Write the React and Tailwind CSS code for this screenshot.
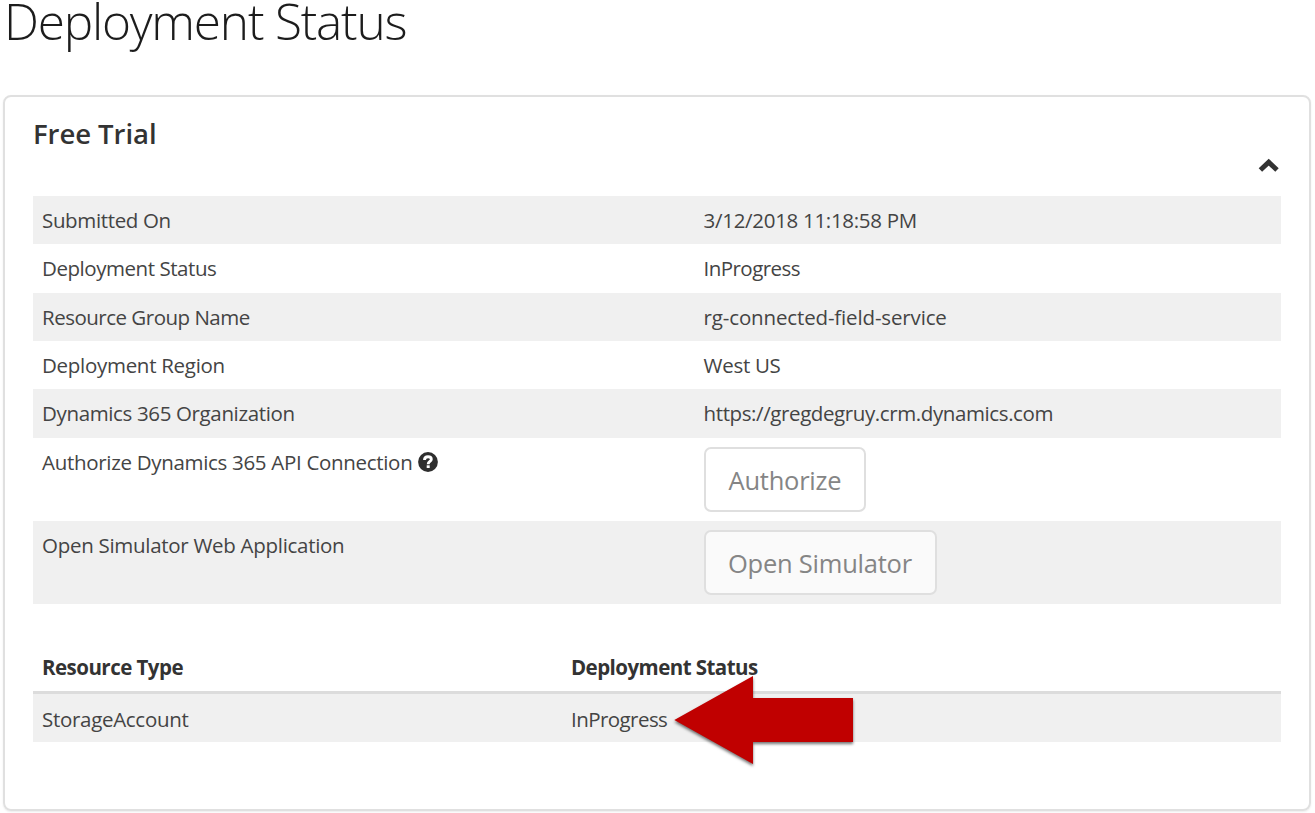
import clsx from "clsx";

const details = [
  { label: "Submitted On", value: "3/12/2018 11:18:58 PM", lt: "tracking-[-0.35px]", vt: "tracking-[-0.3px]" },
  { label: "Deployment Status", value: "InProgress", lt: "tracking-[-0.45px]", vt: "tracking-[-0.56px]" },
  { label: "Resource Group Name", value: "rg-connected-field-service", lt: "tracking-[-0.5px]", vt: "tracking-[-0.15px]" },
  { label: "Deployment Region", value: "West US", lt: "tracking-[-0.29px]", vt: "tracking-[-0.3px]" },
  { label: "Dynamics 365 Organization", value: "https://gregdegruy.crm.dynamics.com", lt: "tracking-[-0.36px]", vt: "tracking-[-0.4px]" },
];

function Chevron() {
  return (
    <svg className="h-[15px] w-[22px]" viewBox="0 0 22 15" aria-hidden="true">
      <path d="M2.4 12 L10.7 4.2 L19 12" fill="none" stroke="#333" strokeWidth="5" />
    </svg>
  );
}

function Help() {
  return (
    <svg className="h-5 w-5" viewBox="0 0 20 20" aria-hidden="true">
      <circle cx="10" cy="10" r="9.9" fill="#2e2e2e" />
      <path d="M6.5 8 C6.5 5.6 8 4.7 10 4.7 C12 4.7 13.3 5.7 13.3 7.3 C13.3 9.5 10.2 9.3 10.2 12.2" fill="none" stroke="#fff" strokeWidth="2.9" />
      <rect x="8.7" y="13.3" width="3" height="2.7" fill="#fff" />
    </svg>
  );
}

function Button({ children, className }) {
  return (
    <button
      type="button"
      disabled
      className={clsx(
        "h-[65px] rounded-[7px] border-2 border-[#dfdfdf] text-left text-[25.5px] leading-[61px] tracking-[-0.23px] text-[#858585]",
        className
      )}
    >
      <span className="block pt-px">{children}</span>
    </button>
  );
}

function Arrow() {
  return (
    <svg className="absolute left-[638px] top-[30px] h-[104px] w-[192px]" viewBox="0 0 192 104" aria-hidden="true">
      <path
        d="M3.3 48 L82 4 V26 H182 V70 H82 V92 Z"
        fill="#c00000"
        className="[filter:drop-shadow(0px_2px_1.5px_rgba(0,0,0,0.55))]"
      />
    </svg>
  );
}

export default function App() {
  return (
    <main className="flex h-[813px] w-[1315px] flex-col overflow-hidden bg-white pl-[3px] font-['Open_Sans',sans-serif] text-[20.5px] text-[#444] whitespace-nowrap">
      <h1 className="h-[95px] pl-px text-[49.5px] leading-[42px] font-light tracking-[-1.2px] text-[#1c1c1c]">Deployment Status</h1>

      <section className="flex h-[716px] w-[1308px] flex-col rounded-lg border-2 border-[#e0e0e0] px-7 pt-[23px] shadow-[0_1px_2px_rgba(0,0,0,0.08)]">
        <h2 className="text-[27.5px] leading-7 font-semibold tracking-[-0.05px] text-[#333]">Free Trial</h2>
        <div className="flex h-12 justify-end pt-[10px] pr-px">
          <Chevron />
        </div>

        <dl className="flex w-[1248px] flex-col">
          {details.map((row, i) => (
            <div
              key={row.label}
              className={clsx("grid h-[48.33px] grid-cols-[661px_1fr] leading-[48.6px]", i % 2 === 0 && "bg-[#f0f0f0]")}
            >
              <dt className={clsx("pl-[9px]", row.lt)}>{row.label}</dt>
              <dd className={clsx("pl-[9.6px]", row.vt)}>{row.value}</dd>
            </div>
          ))}
          <div className="grid h-[83.35px] grid-cols-[661px_1fr] leading-[49px]">
            <dt className="flex items-start gap-[6px] pl-[9px] tracking-[-0.31px]">
              Authorize Dynamics 365 API Connection
              <span className="pt-[14px]">
                <Help />
              </span>
            </dt>
            <dd className="pt-[9px] pl-[10px]">
              <Button className="w-[162px] bg-white pl-[22.5px]">Authorize</Button>
            </dd>
          </div>
          <div className="grid h-[83px] grid-cols-[661px_1fr] bg-[#f0f0f0] leading-[49px]">
            <dt className="pl-[9px] tracking-[-0.29px]">Open Simulator Web Application</dt>
            <dd className="pt-[9px] pl-[10px]">
              <Button className="w-[233px] bg-[#fafafa] pl-[22px]">Open Simulator</Button>
            </dd>
          </div>
        </dl>

        <div className="relative mt-[38px] w-[1248px]">
          <div className="grid h-[52px] grid-cols-[529px_1fr] border-b-[3px] border-[#dcdcdc] leading-[50.5px] font-bold text-[#333]">
            <span className="pl-[9px] tracking-[-0.53px]">Resource Type</span>
            <span className="pl-[9px] tracking-[-0.55px]">Deployment Status</span>
          </div>
          <div className="grid h-[48.5px] grid-cols-[529px_1fr] bg-[#f0f0f0] leading-[50px]">
            <span className="pl-[9px] tracking-[-0.3px]">StorageAccount</span>
            <span className="pl-[9px] tracking-[-0.56px]">InProgress</span>
          </div>
          <Arrow />
        </div>
      </section>
    </main>
  );
}
